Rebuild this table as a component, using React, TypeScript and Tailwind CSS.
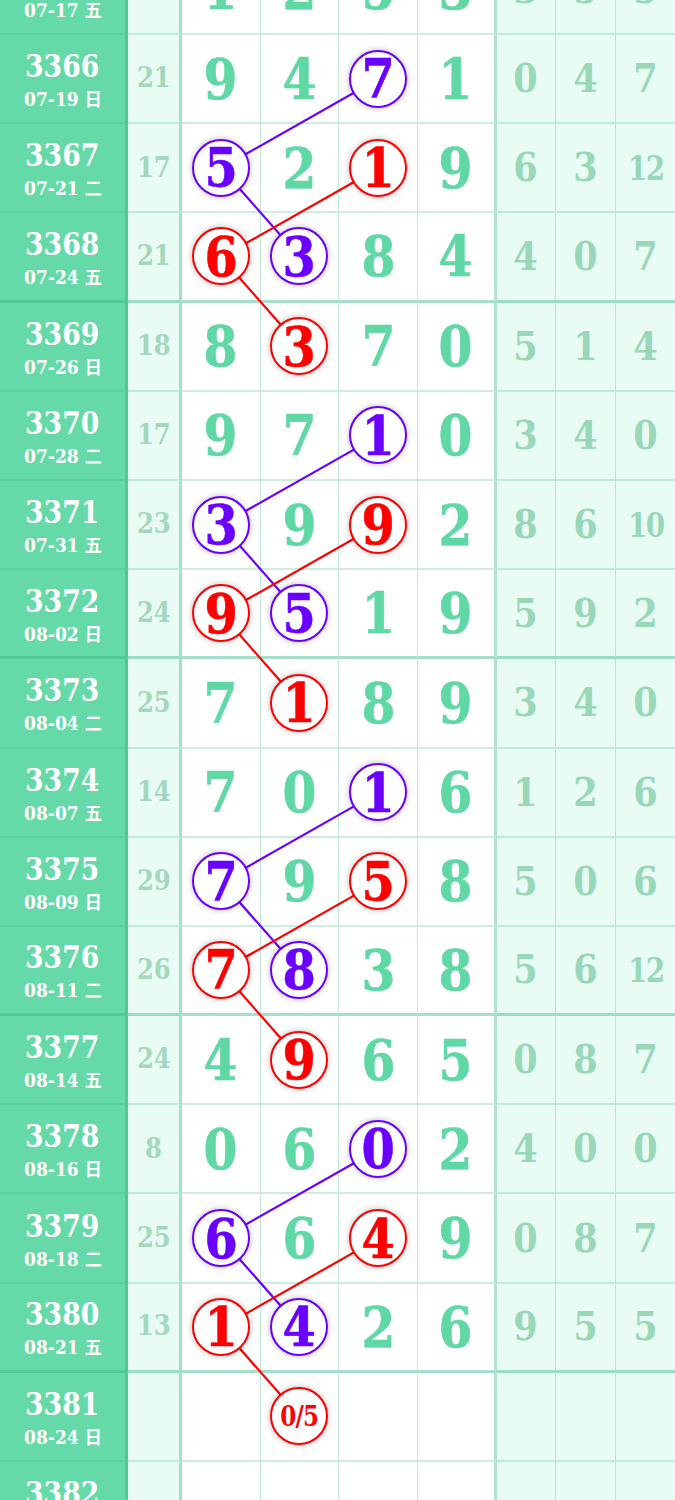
import React from "react";

type Mark = "p" | "r";

type Row = {
  issue: string;
  date: string;
  sum: string;
  d: string[];
  r: string[];
  marks?: Record<number, Mark>;
};

const ROW_H = 89.2;
const COL_X = [221.3, 299.9, 378.6, 457.2];

const rows: Row[] = [
  { issue: "3365", date: "07-17 五", sum: "11", d: ["1", "2", "5", "3"], r: ["3", "5", "5"] },
  { issue: "3366", date: "07-19 日", sum: "21", d: ["9", "4", "7", "1"], r: ["0", "4", "7"], marks: { 2: "p" } },
  { issue: "3367", date: "07-21 二", sum: "17", d: ["5", "2", "1", "9"], r: ["6", "3", "12"], marks: { 0: "p", 2: "r" } },
  { issue: "3368", date: "07-24 五", sum: "21", d: ["6", "3", "8", "4"], r: ["4", "0", "7"], marks: { 0: "r", 1: "p" } },
  { issue: "3369", date: "07-26 日", sum: "18", d: ["8", "3", "7", "0"], r: ["5", "1", "4"], marks: { 1: "r" } },
  { issue: "3370", date: "07-28 二", sum: "17", d: ["9", "7", "1", "0"], r: ["3", "4", "0"], marks: { 2: "p" } },
  { issue: "3371", date: "07-31 五", sum: "23", d: ["3", "9", "9", "2"], r: ["8", "6", "10"], marks: { 0: "p", 2: "r" } },
  { issue: "3372", date: "08-02 日", sum: "24", d: ["9", "5", "1", "9"], r: ["5", "9", "2"], marks: { 0: "r", 1: "p" } },
  { issue: "3373", date: "08-04 二", sum: "25", d: ["7", "1", "8", "9"], r: ["3", "4", "0"], marks: { 1: "r" } },
  { issue: "3374", date: "08-07 五", sum: "14", d: ["7", "0", "1", "6"], r: ["1", "2", "6"], marks: { 2: "p" } },
  { issue: "3375", date: "08-09 日", sum: "29", d: ["7", "9", "5", "8"], r: ["5", "0", "6"], marks: { 0: "p", 2: "r" } },
  { issue: "3376", date: "08-11 二", sum: "26", d: ["7", "8", "3", "8"], r: ["5", "6", "12"], marks: { 0: "r", 1: "p" } },
  { issue: "3377", date: "08-14 五", sum: "24", d: ["4", "9", "6", "5"], r: ["0", "8", "7"], marks: { 1: "r" } },
  { issue: "3378", date: "08-16 日", sum: "8", d: ["0", "6", "0", "2"], r: ["4", "0", "0"], marks: { 2: "p" } },
  { issue: "3379", date: "08-18 二", sum: "25", d: ["6", "6", "4", "9"], r: ["0", "8", "7"], marks: { 0: "p", 2: "r" } },
  { issue: "3380", date: "08-21 五", sum: "13", d: ["1", "4", "2", "6"], r: ["9", "5", "5"], marks: { 0: "r", 1: "p" } },
  { issue: "3381", date: "08-24 日", sum: "", d: ["", "0/5", "", ""], r: ["", "", ""], marks: { 1: "r" } },
  { issue: "3382", date: "08-26 二", sum: "", d: ["", "", "", ""], r: ["", "", ""] },
];

// [row, col] chains, joined centre to centre under the circles
const chains: { color: string; pts: [number, number][] }[] = [];
for (const start of [1, 5, 9, 13]) {
  chains.push({ color: "#6a00ff", pts: [[start, 2], [start + 1, 0], [start + 2, 1]] });
  chains.push({ color: "#ff0000", pts: [[start + 1, 2], [start + 2, 0], [start + 3, 1]] });
}

const font = { fontFamily: '"DejaVu Serif", "Noto Sans CJK SC", serif' };

function Ball({ value, mark }: { value: string; mark: Mark }) {
  const color = mark === "p" ? "border-[#6a00ff] text-[#6a00ff]" : "border-[#ff0000] text-[#ff0000]";
  return (
    <div
      className={`relative z-10 flex h-[58px] w-[58px] items-center justify-center rounded-full border-2 bg-white shadow-[0_0_6px_rgba(0,0,0,0.28)] ${color}`}
    >
      {value.length > 1 ? (
        <span className="inline-block scale-x-[0.85] text-[27px] font-bold leading-none tracking-[-1px]">{value}</span>
      ) : (
        <span className="inline-block scale-x-[0.87] text-[55px] font-bold leading-none [-webkit-text-stroke:0.6px_currentColor]">
          {value}
        </span>
      )}
    </div>
  );
}

export default function App() {
  return (
    <div className="relative h-[1500px] w-[675px] overflow-hidden bg-white" style={font}>
      <div className="relative -mt-[54.2px]">
        {rows.map((row) => {
          const thick = Number(row.issue) % 4 === 0;
          const bb = thick ? "border-b-[3px] border-b-[#3cb98a]/45" : "border-b-2 border-b-[#3cb98a]/25";
          return (
            <div
              key={row.issue}
              className="grid h-[89.2px] grid-cols-[128px_54px_repeat(4,minmax(0,1fr))_repeat(3,59.5px)]"
            >
              <div className={`flex flex-col items-center justify-center border-r-[3px] border-r-[#3cb98a]/50 bg-[#66d9a9] text-white ${bb}`}>
                <span className="inline-block scale-x-[0.86] text-[31px] font-bold leading-[42px]">{row.issue}</span>
                <span className="mt-px inline-block scale-x-[0.95] text-[18px] font-bold leading-[24px]">{row.date}</span>
              </div>
              <div className={`flex items-center justify-center border-r-[3px] border-r-[#3cb98a]/40 bg-[#e9fcf4] ${bb}`}>
                <span className="inline-block scale-x-[0.9] text-[27px] font-bold text-[#a3d8bf]">{row.sum}</span>
              </div>
              {row.d.map((v, i) => {
                const mark = row.marks?.[i];
                return (
                  <div
                    key={i}
                    className={`flex items-center justify-center bg-white ${bb} ${i === 3 ? "border-r-[3px] border-r-[#3cb98a]/40" : "border-r border-r-[#3cb98a]/30"}`}
                  >
                    {mark ? (
                      <Ball value={v} mark={mark} />
                    ) : (
                      <span className="inline-block scale-x-[0.87] text-[56px] font-bold leading-none text-[#60d8a5] [-webkit-text-stroke:0.6px_currentColor]">
                        {v}
                      </span>
                    )}
                  </div>
                );
              })}
              {row.r.map((v, i) => (
                <div
                  key={i}
                  className={`flex items-center justify-center bg-[#e9fcf4] ${bb} ${i < 2 ? "border-r border-r-[#3cb98a]/30" : ""}`}
                >
                  <span
                    className={`inline-block font-bold leading-none text-[#98d8b9] ${v.length > 1 ? "scale-x-[0.82] text-[34px] tracking-[-2px]" : "scale-x-[0.9] text-[39px]"}`}
                  >
                    {v}
                  </span>
                </div>
              ))}
            </div>
          );
        })}

        <svg className="pointer-events-none absolute left-0 top-0" width={675} height={rows.length * ROW_H}>
          {chains.map((c, ci) =>
            c.pts.slice(1).map(([r, col], k) => {
              const [pr, pc] = c.pts[k];
              return (
                <line
                  key={`${ci}-${k}`}
                  x1={COL_X[pc]}
                  y1={pr * ROW_H + ROW_H / 2 - 1}
                  x2={COL_X[col]}
                  y2={r * ROW_H + ROW_H / 2 - 1}
                  stroke={c.color}
                  strokeWidth={2.2}
                />
              );
            })
          )}
        </svg>
      </div>
    </div>
  );
}
